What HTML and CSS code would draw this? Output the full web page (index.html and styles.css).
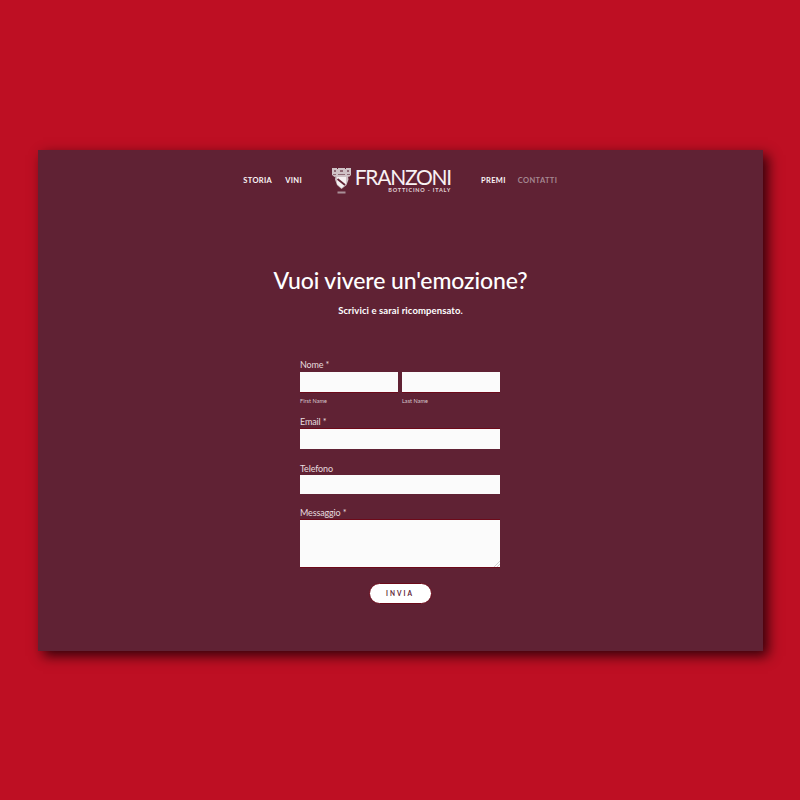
FILE: index.html
```html
<!DOCTYPE html>
<html lang="it">
<head>
<meta charset="utf-8">
<title>Franzoni - Contatti</title>
<link rel="stylesheet" href="styles.css">
</head>
<body>
<main class="panel">
  <header class="nav">
    <nav class="nav-left">
      <a class="nav-link">STORIA</a>
      <a class="nav-link">VINI</a>
    </nav>
    <div class="logo">
      <svg class="crest" width="19" height="27" viewBox="0 0 19 27" aria-hidden="true">
        <path d="M0 1h5v1h1V1h7v1h1V1h5v7l-2 2-1-.5.500 3-2 5.500L9.500 22 5 18 3 12.500l.5-3-1 .5-2.500-2z" fill="#cfc2c6"/>
        <path d="M2 3h2v2H2zM8 3h3v2H8zM15 3h2v2h-2zM1 7h3v1H1zM15 7h3v1h-3zM6 7h7v1H6z" fill="#8d6a75"/>
        <path d="M5 10h9v7l-4.500 4L5 17z" fill="#f5f0f1"/>
        <path d="M5.500 12l7.500 6" stroke="#602234" stroke-width="1.800" fill="none"/>
        <rect x="5.500" y="24.500" width="8" height="2" fill="#a98f97"/>
      </svg>
      <div class="wordmark">
        <span class="brand">FRANZONI</span>
        <span class="tagline">BOTTICINO - ITALY</span>
      </div>
    </div>
    <nav class="nav-right">
      <a class="nav-link">PREMI</a>
      <a class="nav-link nav-link-active">CONTATTI</a>
    </nav>
  </header>

  <section class="intro">
    <h1 class="title">Vuoi vivere un'emozione?</h1>
    <p class="subtitle">Scrivici e sarai ricompensato.</p>
  </section>

  <form class="form">
    <div class="field">
      <span class="label">Nome *</span>
      <div class="name-row">
        <div class="name-col">
          <span class="input input-bottom"></span>
          <span class="hint">First Name</span>
        </div>
        <div class="name-col">
          <span class="input input-bottom"></span>
          <span class="hint">Last Name</span>
        </div>
      </div>
    </div>
    <div class="field field-email">
      <span class="label label-short">Email *</span>
      <span class="input input-top"></span>
    </div>
    <div class="field field-phone">
      <span class="label label-short">Telefono</span>
      <span class="input input-plain"></span>
    </div>
    <div class="field field-message">
      <span class="label label-short">Messaggio *</span>
      <span class="input input-top input-bottom textarea">
        <svg class="grip" width="7" height="7" viewBox="0 0 7 7" aria-hidden="true"><path d="M1 7l6-6M4 7l3-3" stroke="#c4c4c4" stroke-width="0.800"/></svg>
      </span>
    </div>
    <div class="submit-row"><span class="submit">INVIA</span></div>
  </form>
</main>
</body>
</html>
```
FILE: styles.css
```css
* { box-sizing: border-box; }
html, body { margin: 0; height: 100%; }
body {
  width: 800px;
  height: 800px;
  background: #be0f23;
  padding: 150px 37px 149px 38px;
  font-family: "Lato", "Noto Sans", sans-serif;
  color: #fff;
  overflow: hidden;
}
.panel {
  height: 501px;
  background: #602234;
  box-shadow: 5px 5px 12px rgba(35, 0, 8, 0.9);
  display: flex;
  flex-direction: column;
  align-items: center;
}
.nav {
  width: 100%;
  height: 60px;
  display: grid;
  grid-template-columns: 290px 124px 1fr;
  align-items: center;
}
.nav-left { display: flex; justify-content: flex-end; gap: 13px; padding: 2px 26px 0 0; }
.nav-right { display: flex; gap: 12px; padding: 2px 0 0 29px; }
.nav-link {
  font-size: 7.500px;
  font-weight: 700;
  letter-spacing: 0.35px;
  color: #fbf6f7;
  line-height: 10px;
}
.nav-link-active { color: #a58791; }
.logo { display: flex; align-items: center; gap: 4px; height: 30px; padding-left: 4px; }
.crest { flex: none; }
.wordmark { display: flex; flex-direction: column; align-items: flex-end; width: 96px; }
.brand {
  font-size: 21px;
  line-height: 17px;
  height: 17px;
  font-weight: 400;
  color: #f8f1f3;
  letter-spacing: -1.250px;
  white-space: nowrap;
}
.tagline {
  font-size: 5.500px;
  font-weight: 700;
  line-height: 6px;
  letter-spacing: 0.8px;
  color: #e3d5d9;
  white-space: nowrap;
  margin-top: 2px;
}
.intro { margin-top: 54px; display: flex; flex-direction: column; align-items: center; }
.title { margin: 0; font-size: 23px; line-height: 32px; font-weight: 500; letter-spacing: -0.1px; color: #fff; }
.subtitle { margin: 9px 0 0; font-size: 9.500px; line-height: 12px; font-weight: 700; letter-spacing: 0.1px; color: #fff; }
.form { width: 200px; margin: 42px 1px 0 0; display: flex; flex-direction: column; }
.field { display: flex; flex-direction: column; }
.label { font-size: 9px; line-height: 12px; letter-spacing: -0.15px; color: #e6dbde; height: 13px; }
.label-short { height: 12px; }
.name-row { display: flex; gap: 4px; }
.name-col { flex: 1; display: flex; flex-direction: column; }
.input {
  display: block;
  position: relative;
  height: 20px;
  background: #fbfbfb;
}
.input-top { height: 21px; border-top: 1px solid #6d0a1a; }
.input-bottom { height: 21px; border-bottom: 1px solid #6d0a1a; }
.input-plain { height: 19px; }
.hint { font-size: 5.500px; line-height: 7px; margin-top: 5px; color: #d9c9ce; letter-spacing: 0.05px; }
.field-email { margin-top: 11px; }
.field-phone { margin-top: 14px; }
.field-message { margin-top: 13px; }
.textarea { height: 49px; }
.grip { position: absolute; right: 0; bottom: 0; }
.submit-row { display: flex; justify-content: center; margin-top: 15px; }
.submit {
  width: 63px;
  height: 21px;
  border-radius: 11px;
  background: #fff;
  border: 1px solid #6d0a1a;
  color: #602234;
  font-size: 6.500px;
  font-weight: 700;
  letter-spacing: 2px;
  display: flex;
  align-items: center;
  justify-content: center;
}
```
